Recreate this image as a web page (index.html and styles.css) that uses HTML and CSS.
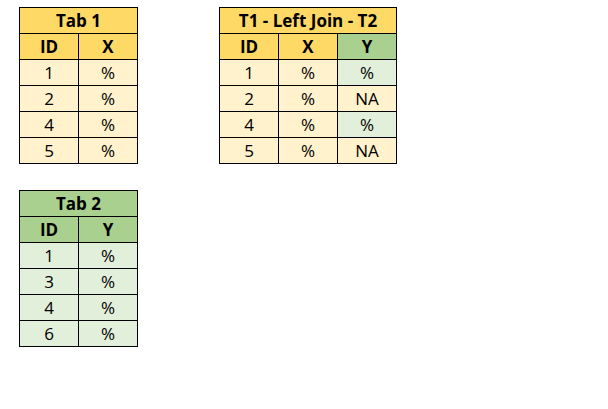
FILE: index.html
```html
<!DOCTYPE html>
<html>
<head>
<meta charset="utf-8">
<link rel="stylesheet" href="styles.css">
</head>
<body>
<div class="page">
  <div class="row">
    <table class="tbl">
      <tr><th colspan="2" class="gold">Tab 1</th></tr>
      <tr><th class="gold">ID</th><th class="gold">X</th></tr>
      <tr><td class="cream">1</td><td class="cream">%</td></tr>
      <tr><td class="cream">2</td><td class="cream">%</td></tr>
      <tr><td class="cream">4</td><td class="cream">%</td></tr>
      <tr><td class="cream">5</td><td class="cream">%</td></tr>
    </table>
    <table class="tbl">
      <tr><th colspan="3" class="gold">T1 - Left Join - T2</th></tr>
      <tr><th class="gold">ID</th><th class="gold">X</th><th class="green">Y</th></tr>
      <tr><td class="cream">1</td><td class="cream">%</td><td class="mint">%</td></tr>
      <tr><td class="cream">2</td><td class="cream">%</td><td class="cream">NA</td></tr>
      <tr><td class="cream">4</td><td class="cream">%</td><td class="mint">%</td></tr>
      <tr><td class="cream">5</td><td class="cream">%</td><td class="cream">NA</td></tr>
    </table>
  </div>
  <div class="row">
    <table class="tbl">
      <tr><th colspan="2" class="green">Tab 2</th></tr>
      <tr><th class="green">ID</th><th class="green">Y</th></tr>
      <tr><td class="mint">1</td><td class="mint">%</td></tr>
      <tr><td class="mint">3</td><td class="mint">%</td></tr>
      <tr><td class="mint">4</td><td class="mint">%</td></tr>
      <tr><td class="mint">6</td><td class="mint">%</td></tr>
    </table>
  </div>
</div>
</body>
</html>
```
FILE: styles.css
```css
html, body {
  margin: 0;
  padding: 0;
  background: #ffffff;
}
body {
  font-family: "Open Sans", Lato, sans-serif;
  color: #000000;
}
.page {
  padding: 7px 0 0 19px;
  display: flex;
  flex-direction: column;
  gap: 26px;
}
.row {
  display: flex;
  align-items: flex-start;
  gap: 81px;
}
.tbl {
  border-collapse: collapse;
  table-layout: fixed;
}
.tbl th, .tbl td {
  border: 1px solid #000000;
  width: 58px;
  height: 25px;
  padding: 0;
  text-align: center;
  vertical-align: middle;
  font-size: 17px;
  line-height: 23px;
  overflow: hidden;
  white-space: nowrap;
}
.tbl th {
  font-weight: bold;
}
.tbl td {
  font-weight: normal;
}
.gold { background: #ffd966; }
.cream { background: #fff2cc; }
.green { background: #a9d08e; }
.mint { background: #e2efda; }
```
